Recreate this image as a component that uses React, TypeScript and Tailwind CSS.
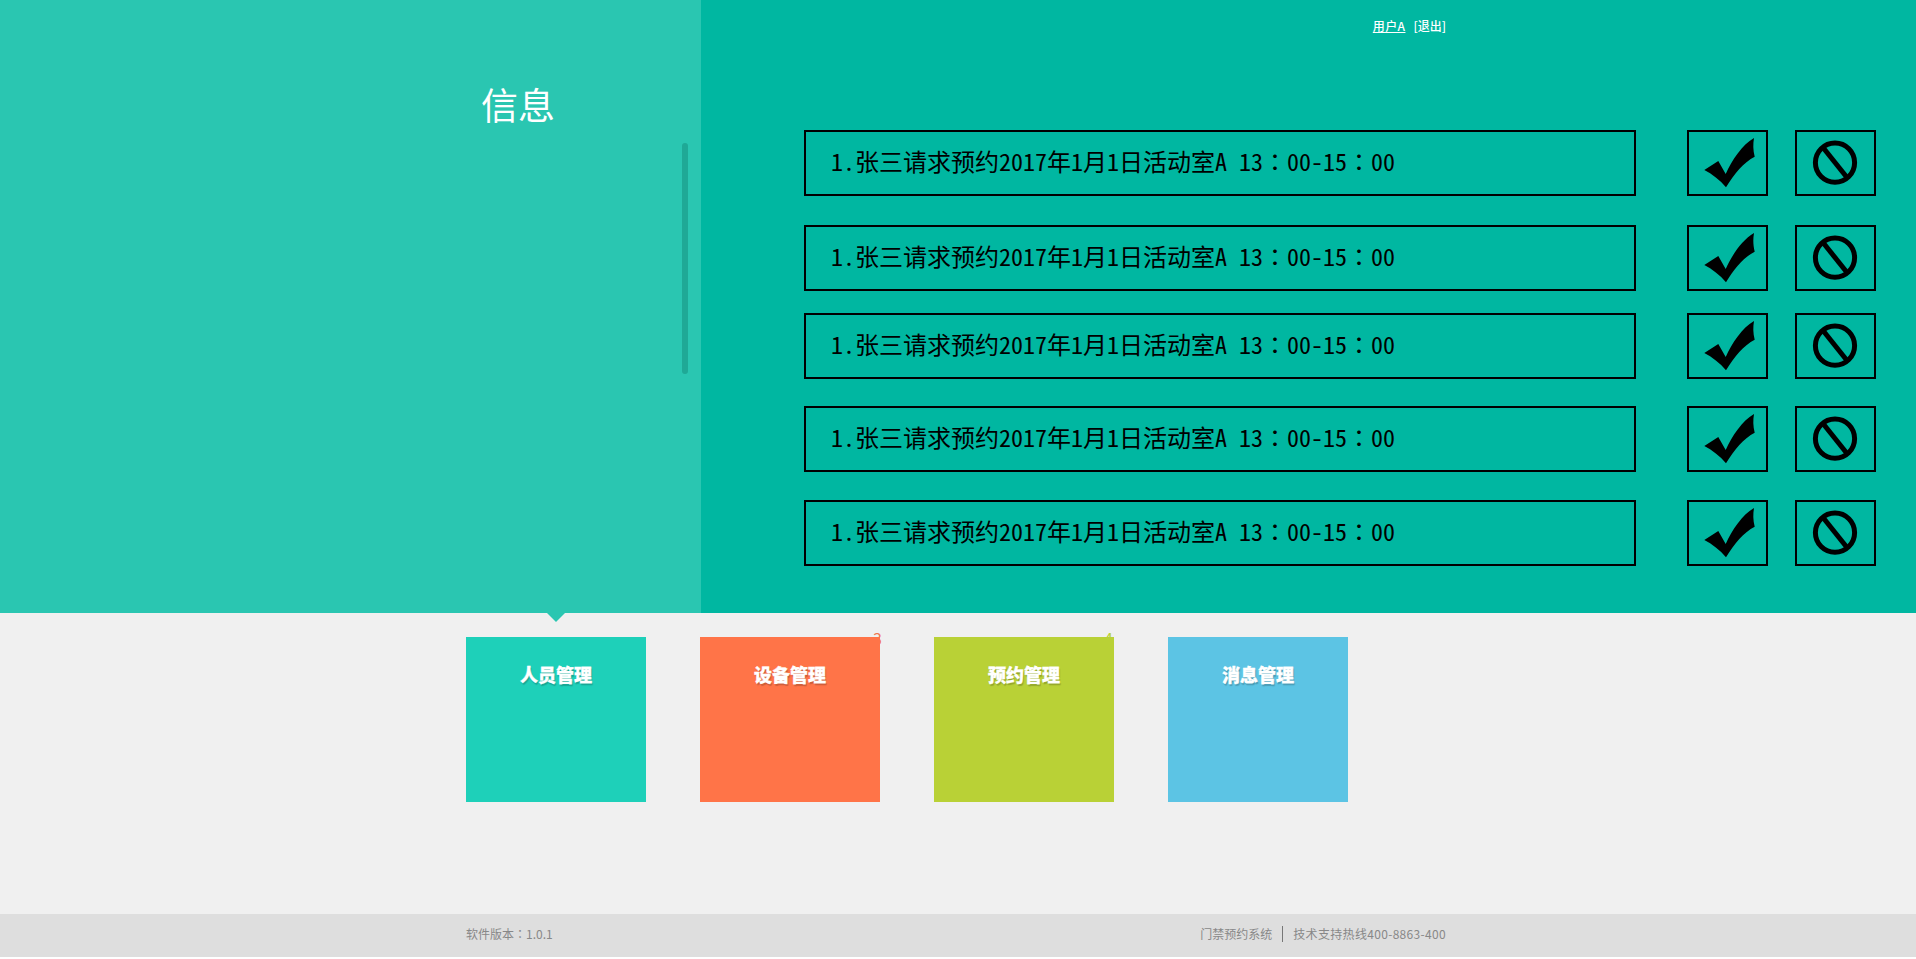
import React from 'react';

const sans = 'font-["Noto_Sans_CJK_SC","Noto_Sans",sans-serif]';

// top offset of each request row, they are not evenly spaced in the original
const rows = [
    { id: 1, className: '' },
    { id: 2, className: 'mt-[29px]' },
    { id: 3, className: 'mt-[22px]' },
    { id: 4, className: 'mt-[27px]' },
    { id: 5, className: 'mt-[28px]' },
];

const CheckIcon = () => (
    <svg width="77" height="62" viewBox="0 0 77 62" fill="#000">
        <path d="M15.3 38 L29.3 29 L36.7 42 C43 28 53 13 65 6 C64 12 64 18 65.7 24.7 C55 30 45 42 37 55.3 C31 48 23 42 15.3 38 Z" />
    </svg>
);

const BanIcon = () => (
    <svg width="77" height="62" viewBox="0 0 77 62" fill="none" stroke="#000" strokeWidth="5">
        <circle cx="38" cy="30.7" r="19.6" />
        <path d="M26 15.5 L50 45.5" />
    </svg>
);

// the colon sits nearer the middle of its cell in the original
const Colon = () => <span className='font-["Noto_Sans_Mono_CJK_KR","Noto_Sans_CJK_KR",monospace]'>：</span>;

const RequestRow: React.FC<{ className: string }> = ({ className }) => (
    <div className={`flex ${className}`}>
        <div className='w-[832px] h-[66px] border-2 border-black flex items-center pl-[25px] pb-[4px] text-[24px] text-black whitespace-pre font-["Noto_Sans_Mono_CJK_SC","Noto_Sans_CJK_SC",monospace]'>
            <span>1.张三请求预约2017年1月1日活动室A 13<Colon />00-15<Colon />00</span>
        </div>
        <button className="ml-[51px] w-[81px] h-[66px] border-2 border-black flex items-center justify-center">
            <CheckIcon />
        </button>
        <button className="ml-[27px] w-[81px] h-[66px] border-2 border-black flex items-center justify-center">
            <BanIcon />
        </button>
    </div>
);

const cards = [
    { title: '人员管理', bg: 'bg-[#1ed0b9]', badge: '', badgeClass: '' },
    { title: '设备管理', bg: 'bg-[#ff7448]', badge: '3', badgeClass: 'text-[#ef7752] right-[-2px]' },
    { title: '预约管理', bg: 'bg-[#b9d136]', badge: '4', badgeClass: 'text-[#b9d136] right-[1px]' },
    { title: '消息管理', bg: 'bg-[#5cc4e4]', badge: '', badgeClass: '' },
];

export default function App() {
    return (
        <div className={`w-full ${sans}`}>
            {/* Top band */}
            <div className="flex h-[613px] bg-[#00b7a1]">
                <div className="relative w-[701px] shrink-0 bg-[#2ac6b1] pl-[481px] pt-[78px]">
                    <h1 className="text-[37px] leading-[52px] text-white font-normal">信息</h1>
                    <div className="absolute left-[682px] top-[143px] w-[6px] h-[231px] rounded-sm bg-[#1fa996]" />
                </div>
                <div className="flex-1">
                    <div className="w-[745px] h-[130px] pt-[17px] text-right text-[12px] leading-[18px] font-medium text-white">
                        <a href="#user" className="underline tracking-[0.4px]">用户A</a>
                        <a href="#logout" className="ml-[8px]">[退出]</a>
                    </div>
                    <div className="pl-[103px]">
                        {rows.map((row) => (
                            <RequestRow key={row.id} className={row.className} />
                        ))}
                    </div>
                </div>
            </div>

            {/* Menu cards */}
            <div className="h-[301px] bg-[#f0f0f0]">
                <div className="w-[980px] ml-[466px] pt-[24px] flex gap-[54px]">
                    {cards.map((card, index) => (
                        <div key={card.title} className="relative w-[180px] h-[165px]">
                            {index === 0 && (
                                <div className="absolute left-[81px] -top-[24px] w-0 h-0 border-x-[9px] border-x-transparent border-t-[9px] border-t-[#2ac6b1]" />
                            )}
                            {card.badge && (
                                <span className={`absolute top-[-9px] text-[16px] leading-[20px] ${card.badgeClass}`}>{card.badge}</span>
                            )}
                            <div className={`relative h-full ${card.bg} pt-[24px] text-center text-[18px] leading-[26px] font-black text-white [-webkit-text-stroke:0.3px_white] [text-shadow:1px_2px_1px_rgba(0,0,0,0.2)]`}>
                                {card.title}
                            </div>
                        </div>
                    ))}
                </div>
            </div>

            {/* Footer */}
            <div className="h-[43px] bg-[#dedede] text-[12px] text-[#888]">
                <div className="w-[980px] ml-[466px] h-full flex items-center justify-between pb-[3px]">
                    <span>软件版本<span className='font-["Noto_Sans_CJK_KR"]'>：</span>1.0.1</span>
                    <div className="flex items-center">
                        <span>门禁预约系统</span>
                        <span className="mx-[10px] w-px h-[16px] bg-[#777]" />
                        <span className="tracking-[0.32px]">技术支持热线400-8863-400</span>
                    </div>
                </div>
            </div>
        </div>
    );
}
